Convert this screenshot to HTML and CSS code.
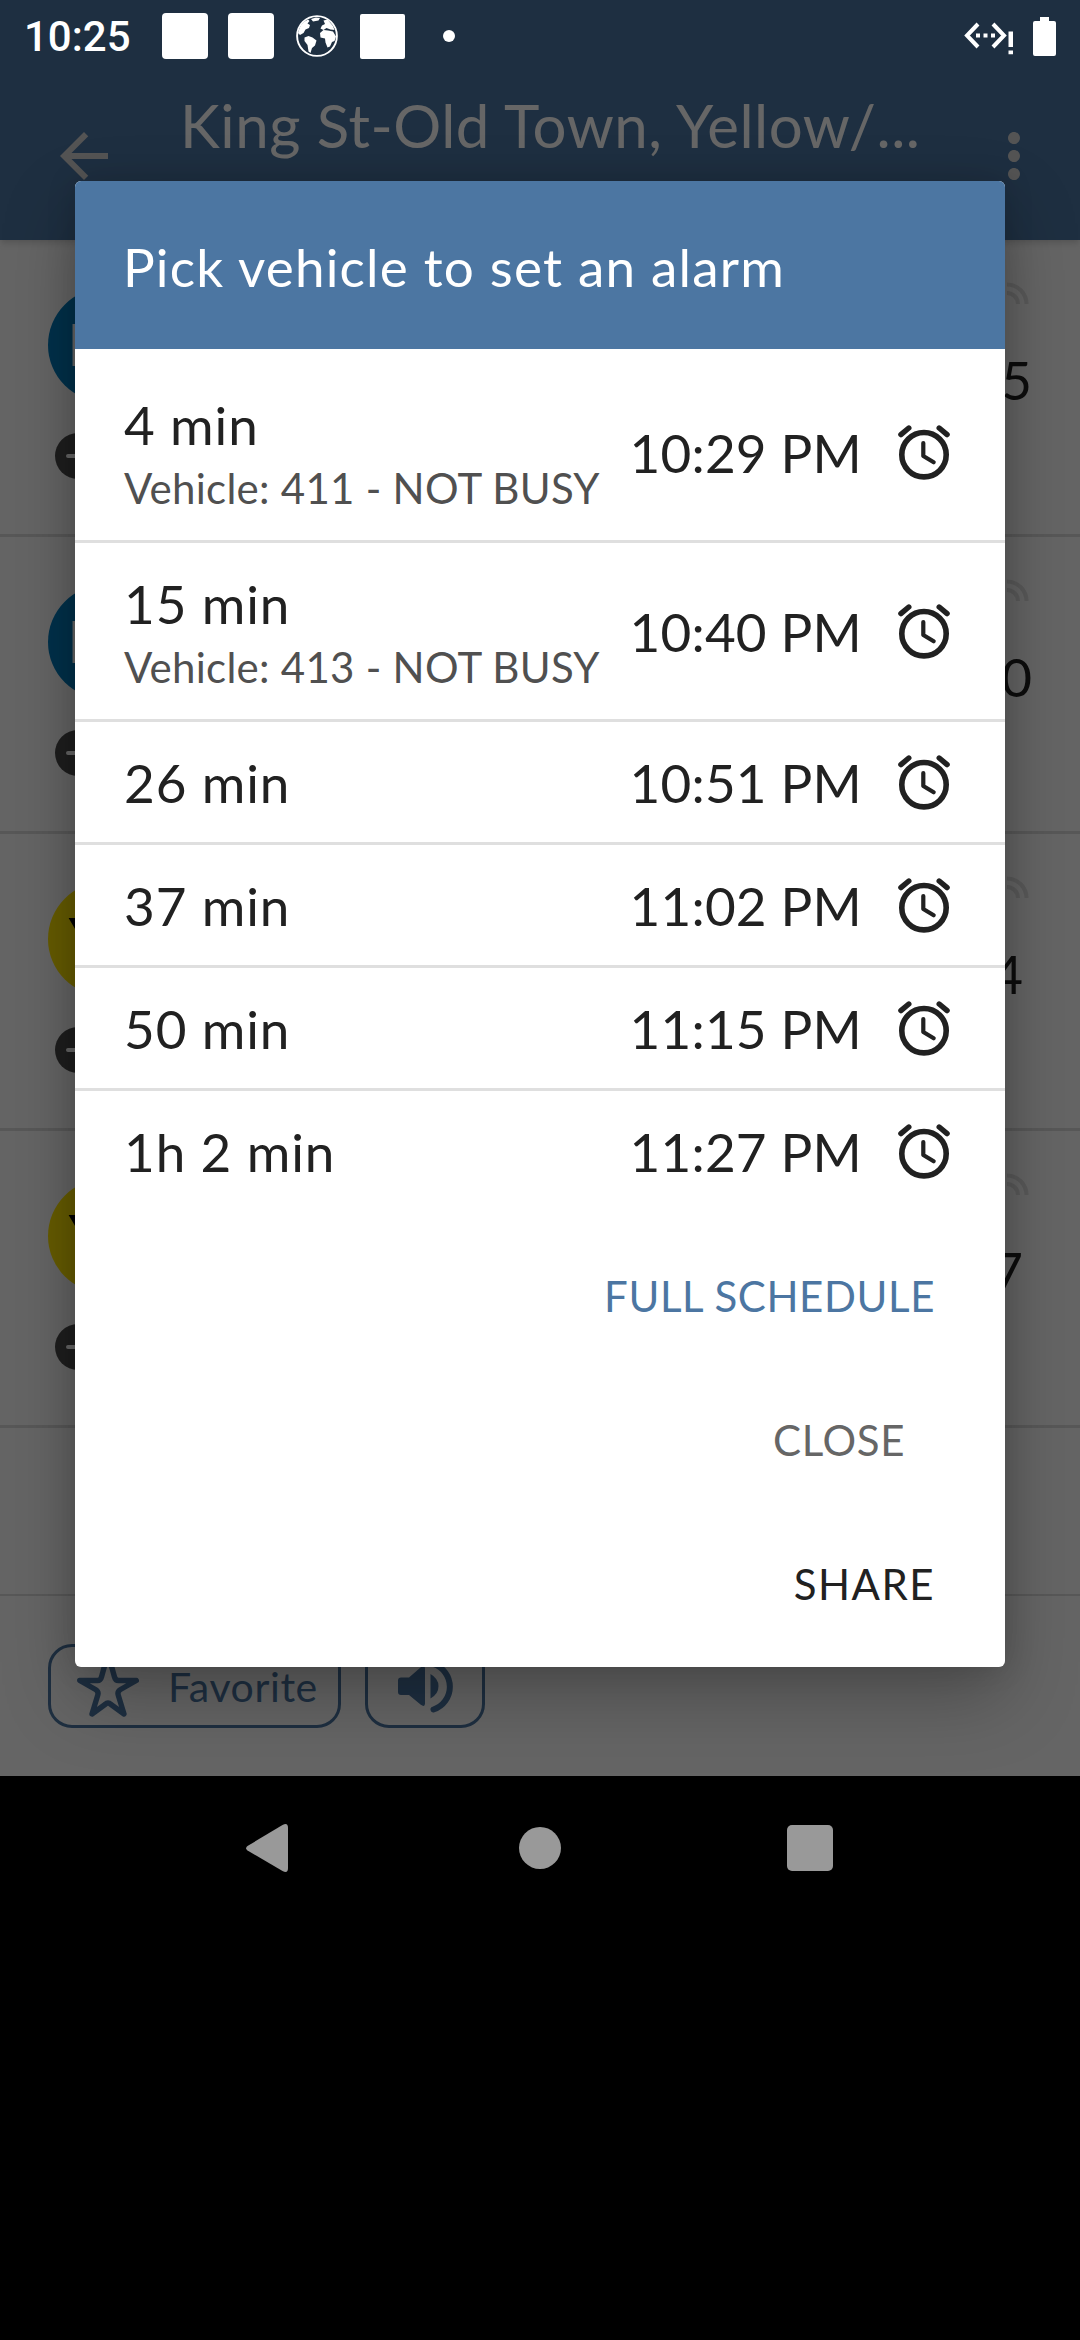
FILE: index.html
```
<!DOCTYPE html>
<html lang="en">
<head>
<meta charset="utf-8">
<title>Pick vehicle to set an alarm</title>
<link rel="stylesheet" href="styles.css">
</head>
<body>
<svg class="defs" width="0" height="0" aria-hidden="true">
  <symbol id="alarm" viewBox="0 0 56 56">
    <g fill="none" stroke="currentColor" stroke-linecap="round" stroke-linejoin="round">
      <circle cx="28" cy="30.7" r="22.2" stroke-width="5.6"/>
      <path d="M4.9 10.6L12.8 4M43.2 4l7.9 6.6" stroke-width="5.4"/>
      <path d="M27.3 19v13l10.4 6.2" stroke-width="4.2"/>
    </g>
  </symbol>
  <symbol id="live" viewBox="0 0 30 26">
    <path d="M5 4.5a19.5 19.5 0 0 1 19.5 19.5M5 13a11 11 0 0 1 11 11" fill="none" stroke="currentColor" stroke-width="4"/>
  </symbol>
</svg>

<div class="screen">
  <header class="appbar">
    <svg class="back" viewBox="0 0 24 24"><path fill="currentColor" d="M20 11H7.83l5.59-5.59L12 4l-8 8 8 8 1.41-1.41L7.83 13H20v-2z"/></svg>
    <h1 class="stop-name">King St-Old Town, Yellow/...</h1>
    <svg class="more" viewBox="0 0 24 24"><path fill="currentColor" d="M12 8c1.1 0 2-.9 2-2s-.9-2-2-2-2 .9-2 2 .9 2 2 2zm0 2c-1.1 0-2 .9-2 2s.9 2 2 2 2-.9 2-2-.9-2-2-2zm0 6c-1.1 0-2 .9-2 2s.9 2 2 2 2-.9 2-2-.9-2-2-2z"/></svg>
  </header>

  <main class="lines">
    <div class="line">
      <div class="line-left"><div class="badge blue">B</div><div class="minus"></div></div>
      <div class="line-right"><svg class="live"><use href="#live"/></svg><span class="eta">5</span></div>
    </div>
    <div class="line">
      <div class="line-left"><div class="badge blue">B</div><div class="minus"></div></div>
      <div class="line-right"><svg class="live"><use href="#live"/></svg><span class="eta">0</span></div>
    </div>
    <div class="line">
      <div class="line-left"><div class="badge yellow">Y</div><div class="minus"></div></div>
      <div class="line-right"><svg class="live"><use href="#live"/></svg><span class="eta inset">4</span></div>
    </div>
    <div class="line">
      <div class="line-left"><div class="badge yellow">Y</div><div class="minus"></div></div>
      <div class="line-right"><svg class="live"><use href="#live"/></svg><span class="eta inset">7</span></div>
    </div>
    <div class="line blank"></div>
  </main>

  <div class="tools">
    <div class="tool favorite">
      <svg class="star" viewBox="0 0 62 68"><path d="M31 3.500L24.500 27Q23.600 30.500 20.500 30.500H2.700L18.500 39.500Q21.800 41.500 20.800 45L15 64L28 54.500Q31 51.500 34 54.500L47 64L41.200 45Q40.200 41.500 43.500 39.500L59.300 30.500H41.500Q38.400 30.500 37.500 27Z" fill="none" stroke="currentColor" stroke-width="5.400" stroke-linejoin="round"/></svg>
      <span>Favorite</span>
    </div>
    <div class="tool sound">
      <svg class="speaker" viewBox="0 0 56 56"><path fill="currentColor" d="M3 19.500h8L22.500 9.500q4.500-3.200 4.500 1V45.500q0 4.200-4.500 1L11 37H3q-3 0-3-3V22.500q0-3 3-3zM32.500 16q8 4.500 8 12.300T32.500 40.500z"/><path d="M35.500 6a24 24 0 0 1 0 45.500" fill="none" stroke="currentColor" stroke-width="6" stroke-linecap="round"/></svg>
    </div>
  </div>

  <div class="scrim"></div>

  <div class="statusbar">
    <span class="clock">10:25</span>
    <i class="sq"></i><i class="sq"></i>
    <svg class="globe" viewBox="0 0 42 42">
      <circle cx="21" cy="21" r="19.900" fill="none" stroke="#fff" stroke-width="1.900"/>
      <path fill="#fff" d="M2 18Q4 8 12 4.500L13.500 6l-2 2.500 2.500 1.500-1 3-3.500 1.500-2 3.500L4 20z"/>
      <path fill="#fff" d="M8.500 22.500l4-1.500 4 1.500 4 3-1.500 5-3 2.500-1.500 5-2-1.500-1-6.500-3-4z"/>
      <path fill="#fff" d="M24 18l3.500-3 4.500.5 5 1 3 5-1.500 4.500-2.500 1-2 4.500-2.500 1-2-5-.5-4-4.500-1z"/>
      <path fill="#fff" d="M24.500 13.500l1.500-3 3-1.500-1.500-3.500 4-1L37 11l1.500 4-4-.5-4-1.500-3 2z"/>
      <path fill="#fff" d="M15 4l5-1.500 4 .5-1.500 2.500L17 6.500z"/>
    </svg>
    <i class="sq plain"></i>
    <i class="dot"></i>
    <svg class="net" viewBox="0 0 54 40">
      <path d="M17 5L6 16.500L17 28M32 5L43 16.500L32 28" fill="none" stroke="#fff" stroke-width="4"/>
      <path fill="#fff" d="M15 14.500h4v4h-4zM22.500 14.500h4v4h-4zM30 14.500h4v4h-4zM47.500 12.500h4.500v15.500h-4.500zM47.500 31.500h4.500v3.800h-4.500z"/>
    </svg>
    <svg class="battery" viewBox="0 0 23 39"><path fill="#fff" d="M7 0h9v4h5q2 0 2 2v31q0 2-2 2H2q-2 0-2-2V6q0-2 2-2h5z"/></svg>
  </div>

  <section class="dialog">
    <h2 class="dialog-title">Pick vehicle to set an alarm</h2>
    <div class="times">
      <div class="row tall"><div class="wait"><b>4 min</b><small>Vehicle: 411 - NOT BUSY</small></div><time>10:29 PM</time><svg class="alarm"><use href="#alarm"/></svg></div>
      <div class="row tall"><div class="wait"><b>15 min</b><small>Vehicle: 413 - NOT BUSY</small></div><time>10:40 PM</time><svg class="alarm"><use href="#alarm"/></svg></div>
      <div class="row"><div class="wait"><b>26 min</b></div><time>10:51 PM</time><svg class="alarm"><use href="#alarm"/></svg></div>
      <div class="row"><div class="wait"><b>37 min</b></div><time>11:02 PM</time><svg class="alarm"><use href="#alarm"/></svg></div>
      <div class="row"><div class="wait"><b>50 min</b></div><time>11:15 PM</time><svg class="alarm"><use href="#alarm"/></svg></div>
      <div class="row"><div class="wait"><b>1h 2 min</b></div><time>11:27 PM</time><svg class="alarm"><use href="#alarm"/></svg></div>
    </div>
    <div class="actions">
      <button class="full">FULL SCHEDULE</button>
      <button class="close">CLOSE</button>
      <button class="share">SHARE</button>
    </div>
  </section>
</div>

<nav class="navbar">
  <svg class="nav-back" viewBox="0 0 42 48"><path fill="currentColor" d="M1.500 22L36.500 1Q42-2 42 4V44Q42 50 36.500 47L1.500 26.500Q-1.200 24.200 1.500 22z"/></svg>
  <i class="nav-home"></i>
  <i class="nav-recent"></i>
</nav>
</body>
</html>
```
FILE: styles.css
```
* { box-sizing: border-box; margin: 0; padding: 0; }

body {
  width: 1080px;
  height: 2340px;
  background: #000;
  font-family: Lato, "Open Sans", sans-serif;
  color: #212121;
  overflow: hidden;
}

svg { display: block; flex: none; }
.defs { position: absolute; }

.screen {
  position: relative;
  height: 1776px;
  background: #fcfcfc;
  overflow: hidden;
}

/* App bar */
.appbar {
  position: relative;
  display: flex;
  height: 240px;
  padding: 72px 30px 0 48px;
  align-items: center;
  background: #4c76a2;
  color: #fff;
  box-shadow: 0 2px 8px rgba(0, 0, 0, .2);
}
.back, .more { width: 72px; height: 72px; color: #d2d2d2; }
.stop-name {
  flex: 1;
  align-self: flex-start;
  margin: 17px 0 0 60px;
  font-size: 60px;
  font-weight: 400;
  line-height: 72px;
  letter-spacing: .5px;
  white-space: nowrap;
}

/* Lines behind the dialog */
.line {
  display: flex;
  justify-content: space-between;
  height: 297px;
  padding: 0 48px;
  border-bottom: 3px solid #dcdcdc;
}
.line.blank { height: 168px; border-bottom-width: 2px; }
.line-left { padding-top: 48px; }
.badge {
  width: 114px;
  height: 114px;
  padding-left: 20px;
  border-radius: 50%;
  font-size: 57px;
  font-weight: 700;
  line-height: 112px;
}
.blue { background: #007abc; color: #fff; }
.yellow { background: #ffe600; color: #000; padding-left: 21px; }
.minus {
  display: flex;
  align-items: center;
  width: 46px;
  height: 46px;
  margin: 31px 0 0 7px;
  padding-left: 11px;
  border-radius: 50%;
  background: #4b4b4b;
}
.minus::before {
  content: "";
  width: 24px;
  height: 4px;
  border-radius: 2px;
  background: #fff;
}
.line-right {
  display: flex;
  flex-direction: column;
  align-items: flex-end;
  padding-top: 40px;
}
.live { width: 30px; height: 26px; color: #e0e0e0; }
.eta { margin-top: 42px; font-size: 53px; line-height: 64px; color: #222; }
.eta.inset { margin-right: 9px; }

.tools { display: flex; gap: 24px; padding: 48px; color: #4c76a2; }
.tool {
  display: flex;
  align-items: center;
  height: 84px;
  border: 3px solid #4c76a2;
  border-radius: 24px;
  font-size: 41px;
  letter-spacing: .6px;
}
.favorite { width: 293px; padding-left: 26px; gap: 29px; }
.star { width: 62px; height: 68px; margin-top: -4px; }
.sound { width: 120px; padding-left: 30px; }
.speaker { width: 56px; height: 56px; }

.scrim { position: absolute; inset: 0; background: rgba(0, 0, 0, .6); }

/* System status bar */
.statusbar {
  position: absolute;
  inset: 0 0 auto 0;
  display: flex;
  align-items: center;
  height: 72px;
  color: #fff;
}
.clock {
  width: 162px;
  padding: 2px 0 0 24px;
  font: 500 42px/72px Roboto, sans-serif;
}
.sq { width: 46px; height: 46px; margin-right: 20px; border-radius: 4px; background: #fff; }
.sq.plain { width: 45px; height: 45px; margin: 0 38px 0 22px; border-radius: 2px; }
.globe { width: 42px; height: 42px; margin-left: 2px; }
.dot { width: 12px; height: 12px; border-radius: 50%; background: #fff; }
.net { width: 54px; height: 40px; margin: 6px 0 0 506px; }
.battery { width: 23px; height: 39px; margin-left: 18px; }

/* Dialog */
.dialog {
  position: absolute;
  left: 75px;
  top: 181px;
  width: 930px;
  height: 1486px;
  border-radius: 6px;
  background: #fff;
  overflow: hidden;
  box-shadow: 0 30px 72px rgba(0, 0, 0, .26), 0 0 30px rgba(0, 0, 0, .14);
}
.dialog-title {
  height: 168px;
  padding-left: 48px;
  background: #4c76a2;
  color: #fff;
  font-size: 53px;
  font-weight: 400;
  line-height: 171px;
  letter-spacing: 1.2px;
}
.times { padding-top: 15px; }
.row {
  display: flex;
  align-items: center;
  height: 123px;
  padding: 0 53px 0 49px;
  border-bottom: 3px solid #dfdfdf;
  white-space: nowrap;
}
.row.tall { height: 179px; }
.row:last-child { height: 120px; border-bottom: 0; }
.wait { flex: 1; min-width: 0; }
.wait b, .wait small { display: block; font-weight: 400; }
.wait b { font-size: 53px; line-height: 71px; letter-spacing: .9px; }
.wait small { padding-top: 1px; font-size: 42px; line-height: 55px; letter-spacing: .27px; color: #505050; }
.row time { padding-top: 2px; font-size: 53px; line-height: 64px; letter-spacing: .2px; margin-right: 34px; }
.alarm { width: 56px; height: 56px; }

.actions {
  display: flex;
  flex-direction: column;
  align-items: flex-end;
  padding: 13px 70px 0 0;
}
.actions button {
  height: 144px;
  border: 0;
  background: none;
  font: 400 42px Lato, "Open Sans", sans-serif;
  letter-spacing: .6px;
  color: #212121;
}
.actions .full { color: #4c76a2; }
.actions .close { color: #666; margin-right: 30px; }
.actions .share { letter-spacing: 1.5px; }

/* System navigation bar */
.navbar {
  display: flex;
  align-items: center;
  height: 144px;
  padding-left: 246px;
  color: #999;
}
.nav-back { width: 42px; height: 48px; }
.nav-home { width: 42px; height: 42px; margin: 0 226px 0 231px; border-radius: 50%; background: #999; }
.nav-recent { width: 46px; height: 46px; border-radius: 5px; background: #999; }
```
